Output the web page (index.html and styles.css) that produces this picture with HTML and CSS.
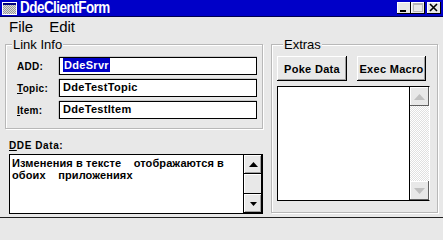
FILE: index.html
```html
<!DOCTYPE html>
<html>
<head>
<meta charset="utf-8">
<link rel="stylesheet" href="styles.css">
</head>
<body>
<div class="window">
  <div class="titlebar">
    <svg class="appicon" width="15" height="13" viewBox="0 0 15 13">
      <defs>
        <pattern id="chk" width="2" height="2" patternUnits="userSpaceOnUse">
          <rect width="2" height="2" fill="#d8d8d8"/>
          <rect width="1" height="1" fill="#9a9a9a"/>
          <rect x="1" y="1" width="1" height="1" fill="#9a9a9a"/>
        </pattern>
      </defs>
      <rect x="0.5" y="0.5" width="14" height="12" fill="url(#chk)" stroke="#ffffff"/>
      <rect x="1" y="1" width="13" height="2" fill="#000080"/>
    </svg>
    <span class="title">DdeClientForm</span>
    <div class="tbtns">
      <span class="tbtn"><svg width="14" height="12" viewBox="0 0 14 12"><rect x="3" y="8" width="6" height="2" fill="#000"/></svg></span>
      <span class="tbtn dis"><svg width="14" height="12" viewBox="0 0 14 12"><rect x="2.5" y="1.5" width="9" height="8" fill="none" stroke="#b8b8b8"/><rect x="2" y="1" width="10" height="2" fill="#b8b8b8"/></svg></span>
      <span class="tbtn close"><svg width="14" height="12" viewBox="0 0 14 12"><path d="M3 2 L10 9 M10 2 L3 9" stroke="#000" stroke-width="1.6"/></svg></span>
    </div>
  </div>
  <div class="menubar">
    <span class="menu">File</span>
    <span class="menu">Edit</span>
  </div>
  <div class="main">
    <div class="leftcol">
      <fieldset class="group link">
        <legend>Link Info</legend>
        <div class="row">
          <span class="lbl">ADD:</span>
          <div class="edit"><span class="sel">DdeSrvr</span></div>
        </div>
        <div class="row">
          <span class="lbl"><u>T</u>opic:</span>
          <div class="edit">DdeTestTopic</div>
        </div>
        <div class="row">
          <span class="lbl"><u>I</u>tem:</span>
          <div class="edit">DdeTestItem</div>
        </div>
      </fieldset>
      <div class="ddelbl"><u>D</u>DE Data:</div>
      <div class="memo">
        <div class="memotext">Изменения в тексте    отображаются в обоих    приложениях</div>
        <div class="vscroll">
          <div class="sbtn"><svg width="9" height="5" viewBox="0 0 9 5"><path d="M4.5 0 L9 5 L0 5 Z" fill="#000"/></svg></div>
          <div class="strack plain"></div>
          <div class="sbtn"><svg width="7" height="4" viewBox="0 0 7 4"><path d="M0 0 L7 0 L3.5 4 Z" fill="#000"/></svg></div>
        </div>
      </div>
    </div>
    <fieldset class="group extras">
      <legend>Extras</legend>
      <div class="btnrow">
        <button class="btn poke">Poke Data</button>
        <button class="btn exec">Exec Macro</button>
      </div>
      <div class="listbox">
        <div class="listarea"></div>
        <div class="vscroll lb">
          <div class="sbtn"><svg width="11" height="6" viewBox="0 0 11 6"><path d="M5.5 0 L11 6 L0 6 Z" fill="#c0c0c0"/></svg></div>
          <div class="strack chk"></div>
          <div class="sbtn"><svg width="11" height="6" viewBox="0 0 11 6"><path d="M0 0 L11 0 L5.5 6 Z" fill="#c0c0c0"/></svg></div>
        </div>
      </div>
    </fieldset>
  </div>
</div>
</body>
</html>
```

FILE: styles.css
```css
html, body {
  margin: 0;
  padding: 0;
  background: #e8e8e8;
}
.window {
  width: 443px;
  height: 218px;
  box-sizing: border-box;
  background: #e8e8e8;
  border-bottom: 1px solid #202020;
  font-family: "Liberation Sans", Arial, sans-serif;
  color: #000;
  overflow: hidden;
}
.titlebar {
  height: 16px;
  background: #0000c8;
  border-bottom: 1px solid #000050;
  display: flex;
  align-items: center;
  padding-left: 2px;
}
.appicon {
  display: block;
  margin-right: 3px;
}
.title {
  color: #fff;
  font-weight: bold;
  font-size: 16px;
  letter-spacing: -0.6px;
  line-height: 16px;
  transform: scaleX(0.84);
  transform-origin: left center;
}
.tbtns {
  margin-left: auto;
  display: flex;
  margin-right: 2px;
}
.tbtn {
  width: 14px;
  height: 12px;
  background: #e8e8e8;
  box-shadow: inset -1px -1px 0 #000, inset 1px 1px 0 #fff;
  display: block;
}
.tbtn svg { display: block; }
.tbtn.close { margin-left: 2px; }
.menubar {
  height: 19px;
  display: flex;
  align-items: center;
  padding-left: 9px;
  font-size: 15px;
}
.menu {
  margin-right: 16px;
  line-height: 19px;
}
.main {
  display: flex;
  padding-left: 5px;
  padding-top: 2px;
  gap: 8px;
}
.group {
  margin: 0;
  border: 1px solid #b8b8b8;
  box-shadow: 1px 1px 0 #fff, inset 1px 1px 0 #fff;
  min-width: 0;
}
.group legend {
  font-size: 13px;
  line-height: 13px;
  padding: 0 1px;
  background: #e8e8e8;
  margin-left: 6px;
  position: relative;
}
.leftcol {
  width: 258px;
  display: flex;
  flex-direction: column;
}
.link {
  width: 258px;
  height: 91px;
  box-sizing: border-box;
  padding: 6px 5px 0 0;
}
.row {
  display: flex;
  align-items: center;
  height: 18px;
  margin-bottom: 4px;
}
.lbl {
  width: 42px;
  padding-left: 11px;
  font-size: 10px;
  font-weight: bold;
  letter-spacing: 0.3px;
}
.edit {
  width: 198px;
  height: 18px;
  box-sizing: border-box;
  background: #fff;
  border: 1px solid #000;
  box-shadow: 0 -1px 0 #c8c8c8, -1px 0 0 #c8c8c8;
  font-size: 11px;
  font-weight: bold;
  line-height: 15px;
  padding-left: 3px;
  letter-spacing: 0.3px;
}
.sel {
  background: #0000c8;
  color: #fff;
  padding: 1px 1px;
}
.ddelbl {
  font-size: 10px;
  font-weight: bold;
  letter-spacing: 0.6px;
  margin-top: 11px;
  margin-left: 4px;
  height: 12px;
  line-height: 12px;
}
.memo {
  margin-top: 2px;
  margin-left: 4px;
  width: 254px;
  height: 60px;
  box-sizing: border-box;
  border: 1px solid #000;
  background: #fff;
  display: flex;
}
.memotext {
  flex: 1;
  font-size: 11px;
  font-weight: bold;
  line-height: 12px;
  padding: 2px 2px 0 2px;
  white-space: pre-wrap;
  letter-spacing: 0.1px;
}
.vscroll {
  width: 18px;
  display: flex;
  flex-direction: column;
  border-left: 1px solid #000;
}
.sbtn {
  height: 19px;
  flex: none;
  background: #e8e8e8;
  box-shadow: inset -1px -1px 0 #000, inset 1px 1px 0 #fff, inset -2px -2px 0 #a0a0a0;
  display: flex;
  align-items: center;
  justify-content: center;
}
.sbtn svg { display: block; }
.strack {
  flex: 1;
}
.strack.plain {
  background: #e8e8e8;
  box-shadow: inset -1px -1px 0 #000, inset 1px 1px 0 #fff;
  margin: 0;
}
.strack.chk {
  background-color: #ffffff;
  background-image: repeating-conic-gradient(#e0e0e0 0 25%, #ffffff 0 50%);
  background-size: 2px 2px;
}
.extras {
  width: 167px;
  height: 175px;
  box-sizing: border-box;
  padding: 5px 0 0 5px;
}
.btnrow {
  display: flex;
  gap: 10px;
}
.btn {
  height: 25px;
  box-sizing: border-box;
  border: none;
  background: #e8e8e8;
  box-shadow: inset -1px -1px 0 #000, inset 1px 1px 0 #fff, inset -2px -2px 0 #a0a0a0;
  font-family: "Liberation Sans", Arial, sans-serif;
  font-size: 11px;
  font-weight: bold;
  padding: 0;
  letter-spacing: 0.3px;
  color: #000;
}
.poke { width: 70px; }
.exec { width: 69px; }
.listbox {
  margin-top: 5px;
  width: 153px;
  height: 115px;
  box-sizing: border-box;
  border: 1px solid #000;
  border-right: 1px solid #fff;
  border-bottom: 1px solid #000;
  display: flex;
  background: #fff;
}
.listarea { flex: 1; }
.vscroll.lb {
  width: 19px;
  border-left: 1px solid #000;
}
.lb .sbtn {
  box-shadow: inset -1px -1px 0 #606060, inset 1px 1px 0 #fff;
}
```
